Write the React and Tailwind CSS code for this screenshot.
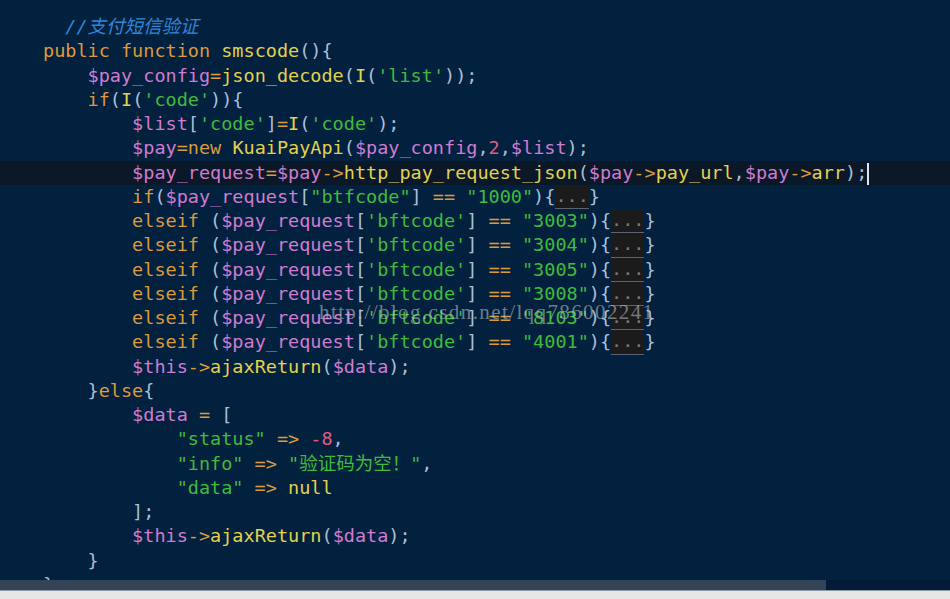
import React from 'react';

// token colours
const K = 'text-[#dc9a3a]'; // keywords / operators
const F = 'text-[#e2d24c]'; // function & member names
const V = 'text-[#cf7ccf]'; // variables
const S = 'text-[#3fbb3c]'; // strings
const P = 'text-[#a9bfd6]'; // punctuation
const N = 'text-[#e25d82]'; // numbers
const C = 'text-[#2f86d6] italic'; // comment

const FOLD = 'FOLD';

const lines = [
    [[C, '  //支付短信验证']],
    [[K, 'public function '], [F, 'smscode'], [P, '(){']],
    [[P, '    '], [V, '$pay_config'], [K, '='], [F, 'json_decode'], [P, '('], [F, 'I'], [P, '('], [S, "'list'"], [P, '));']],
    [[P, '    '], [K, 'if'], [P, '('], [F, 'I'], [P, '('], [S, "'code'"], [P, ')){']],
    [[P, '        '], [V, '$list'], [P, '['], [S, "'code'"], [P, ']'], [K, '='], [F, 'I'], [P, '('], [S, "'code'"], [P, ');']],
    [[P, '        '], [V, '$pay'], [K, '=new '], [F, 'KuaiPayApi'], [P, '('], [V, '$pay_config'], [P, ','], [N, '2'], [P, ','], [V, '$list'], [P, ');']],
    [[P, '        '], [V, '$pay_request'], [K, '='], [V, '$pay'], [K, '->'], [F, 'http_pay_request_json'], [P, '('], [V, '$pay'], [K, '->'], [F, 'pay_url'], [P, ','], [V, '$pay'], [K, '->'], [F, 'arr'], [P, ');']],
    [[P, '        '], [K, 'if'], [P, '('], [V, '$pay_request'], [P, '['], [S, '"btfcode"'], [P, '] '], [K, '=='], [P, ' '], [S, '"1000"'], [P, '){'], [FOLD], [P, '}']],
    ...['3003', '3004', '3005', '3008', '8103', '4001'].map((code) => [
        [P, '        '], [K, 'elseif'], [P, ' ('], [V, '$pay_request'], [P, '['], [S, "'bftcode'"], [P, '] '], [K, '=='], [P, ' '], [S, `"${code}"`], [P, '){'], [FOLD], [P, '}'],
    ]),
    [[P, '        '], [V, '$this'], [K, '->'], [F, 'ajaxReturn'], [P, '('], [V, '$data'], [P, ');']],
    [[P, '    }'], [K, 'else'], [P, '{']],
    [[P, '        '], [V, '$data'], [K, ' = '], [P, '[']],
    [[P, '            '], [S, '"status"'], [K, ' => '], [N, '-8'], [P, ',']],
    [[P, '            '], [S, '"info"'], [K, ' => '], [S, '"验证码为空！"'], [P, ',']],
    [[P, '            '], [S, '"data"'], [K, ' => '], [F, 'null']],
    [[P, '        ];']],
    [[P, '        '], [V, '$this'], [K, '->'], [F, 'ajaxReturn'], [P, '('], [V, '$data'], [P, ');']],
    [[P, '    }']],
    [[P, '}']],
];

const Fold = () => (
    <span className="inline-block w-[33.4px] h-[24.25px] align-top bg-[#1b1b1b] text-[#7a7a7a] text-center leading-[22px] border-b border-[#5b6470]">
        ...
    </span>
);

export default function App() {
    return (
        <div className="w-[950px] h-[599px] flex flex-col bg-[#e6e6e6] overflow-hidden">
            <div className="relative flex-1 bg-[#02213f] overflow-hidden pt-[15px] font-['DejaVu_Sans_Mono','Noto_Sans_CJK_SC',monospace] text-[18.5px]">
                {lines.map((tokens, i) => (
                    <div
                        key={i}
                        className={
                            i === 6
                                ? 'h-[24.25px] leading-[24.25px] pl-[43px] whitespace-pre bg-[#0a1828]'
                                : 'h-[24.25px] leading-[24.25px] pl-[43px] whitespace-pre'
                        }
                    >
                        {tokens.map((t, j) =>
                            t[0] === FOLD ? (
                                <Fold key={j} />
                            ) : (
                                <span key={j} className={t[0]}>
                                    {t[1]}
                                </span>
                            )
                        )}
                        {i === 6 && <span className="inline-block w-[2px] h-[22px] align-middle bg-[#dfe6ee]" />}
                    </div>
                ))}

                {/* watermark */}
                <div className="absolute left-[319px] top-[297px] font-['Liberation_Serif',serif] text-[21px] tracking-[1.4px] text-[#c8ccd0]/55 whitespace-nowrap">
                    http://blog.csdn.net/lqq786002241
                </div>

                {/* horizontal scrollbar */}
                <div className="absolute left-0 right-0 bottom-0 h-[10px] flex bg-[#041b38]">
                    <div className="w-[826px] bg-[#39495b]/90" />
                </div>
            </div>
            <div className="h-[9px] border-t border-[#8c96a2] bg-[#e6e6e6]" />
        </div>
    );
}
